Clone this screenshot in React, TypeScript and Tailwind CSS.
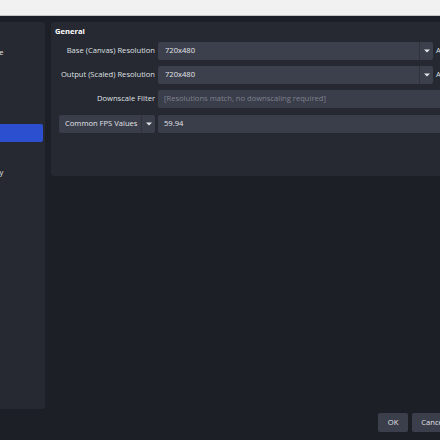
import React from "react";

// OBS "Settings → Video" window, cropped to 440x440.

const FONT = { fontFamily: '"Open Sans", "Noto Sans", sans-serif' };

const NAV = [
  "General",
  "Appearance",
  "Stream",
  "Output",
  "Audio",
  "Video",
  "Hotkeys",
  "Accessibility",
  "Advanced",
];

function Arrow() {
  return (
    <svg width="6" height="4" viewBox="0 0 6 4" className="block">
      <path d="M0 0.5h6L3 3.5z" fill="#e6e7ea" />
    </svg>
  );
}

function Combo({ value }: { value: string }) {
  return (
    <div className="flex h-[18px] flex-1 items-center rounded-[2px] bg-[#3c3f4c]">
      <span className="flex-1 whitespace-nowrap pl-[7px] text-[7.6px] text-[#e4e5e9]">{value}</span>
      <div className="flex h-full w-[14px] items-center justify-center border-l border-[#30323c]">
        <Arrow />
      </div>
    </div>
  );
}

function Label({ children }: { children: React.ReactNode }) {
  return (
    <div className="flex h-[18px] items-center justify-end whitespace-nowrap text-[7.6px] text-[#dfe0e4]">
      {children}
    </div>
  );
}

export default function App() {
  return (
    <div className="h-[440px] w-[440px] overflow-hidden bg-[#1d1f26]" style={FONT}>
      <div className="h-[16px] border-b border-[#c4c4c6] bg-[#f1f1f1]" />

      <div className="flex w-[560px] flex-col">
        <div className="flex h-[393px] gap-[6px] pt-[6px]">
          {/* sidebar list, mostly off to the left */}
          <div className="-ml-[100px] flex w-[145px] flex-col gap-[2px] rounded-[3px] bg-[#272932] pt-[2px]">
            {NAV.map((item) => (
              <div
                key={item}
                className={`mr-[2px] flex h-[18px] items-center whitespace-nowrap rounded-[2px] pl-[61px] text-[7.6px] ${
                  item === "Video" ? "bg-[#2b4fcf] text-white" : "text-[#e2e3e7]"
                }`}
              >
                {item}
              </div>
            ))}
          </div>

          <div className="flex-1 self-start">
            <div className="h-[154px] w-[462px] rounded-[3px] bg-[#272932] px-[8px] pt-[2px]">
              <div className="-ml-[4px] h-[18px] text-[7.6px] font-bold leading-[14px] text-white">
                General
              </div>
              <div className="grid grid-cols-[96px_1fr] gap-x-[3px] gap-y-[6px]">
                <Label>Base (Canvas) Resolution</Label>
                <div className="flex items-center gap-[3px]">
                  <Combo value="720x480" />
                  <span className="w-[69px] whitespace-nowrap text-[7.6px] text-[#dfe0e4]">Aspect Ratio 3:2</span>
                </div>

                <Label>Output (Scaled) Resolution</Label>
                <div className="flex items-center gap-[3px]">
                  <Combo value="720x480" />
                  <span className="w-[69px] whitespace-nowrap text-[7.6px] text-[#dfe0e4]">Aspect Ratio 3:2</span>
                </div>

                <Label>Downscale Filter</Label>
                <div className="flex h-[18px] items-center whitespace-nowrap rounded-[2px] bg-[#3a3d4a] pl-[6px] text-[7.6px] text-[#7f828e]">
                  [Resolutions match, no downscaling required]
                </div>

                <div className="mt-[1px] flex h-[18px] items-center rounded-[2px] bg-[#3a3d4a]">
                  <span className="flex-1 whitespace-nowrap pl-[6px] text-[7.6px] text-[#e2e3e7]">Common FPS Values</span>
                  <div className="flex h-full w-[14px] items-center justify-center border-l border-[#30323c]">
                    <Arrow />
                  </div>
                </div>
                <div className="mt-[1px] flex h-[18px] items-center rounded-[2px] bg-[#3a3d4a] pl-[6px] text-[7.6px] text-[#e2e3e7]">
                  59.94
                </div>
              </div>
            </div>
          </div>
        </div>

        <div className="flex gap-[4px] pl-[378px] pt-[4px]">
          <button className="h-[19px] w-[30px] rounded-[2px] bg-[#3b3e4b] text-[7.6px] text-[#e2e3e7]">OK</button>
          <button className="h-[19px] w-[42px] rounded-[2px] bg-[#3b3e4b] text-[7.6px] text-[#e2e3e7]">Cancel</button>
          <button className="h-[19px] w-[36px] rounded-[2px] bg-[#3b3e4b] text-[7.6px] text-[#e2e3e7]">Apply</button>
        </div>
      </div>
    </div>
  );
}
